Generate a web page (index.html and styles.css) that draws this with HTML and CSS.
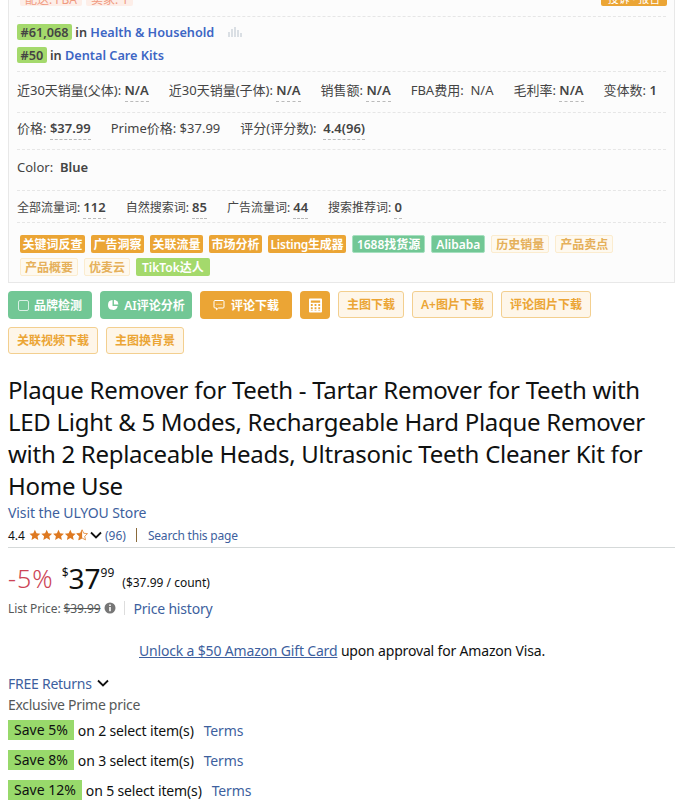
FILE: index.html
```html
<!DOCTYPE html>
<html lang="zh">
<head>
    <meta charset="UTF-8">
    <title>Plaque Remover for Teeth</title>
    <link rel="stylesheet" href="styles.css">
</head>
<body>
    <div class="panel">
        <div class="top-row">
            <div class="top-tags">
                <span class="tag-red">配送: FBA</span>
                <span class="tag-red">卖家: 1</span>
            </div>
            <span class="top-btn">投诉 · 报告</span>
        </div>

        <div class="rank-row">
            <div class="rank-line">
                <span class="rank-num">#61,068</span> in <a class="rank-link">Health &amp; Household</a>
                <svg class="rank-icon" width="14" height="11" viewBox="0 0 14 11"><path d="M1 5v5M4 2v8M7 0v10M10 3v7M13 6v4" stroke="#c4ccd4" stroke-width="1.200" fill="none"/></svg>
            </div>
            <div class="rank-line">
                <span class="rank-num">#50</span> in <a class="rank-link">Dental Care Kits</a>
            </div>
        </div>

        <div class="data-row sales-row">
            <span>近30天销量(父体): <b class="dash">N/A</b></span>
            <span>近30天销量(子体): <b class="dash">N/A</b></span>
            <span>销售额: <b class="dash">N/A</b></span>
            <span>FBA费用: &nbsp;N/A</span>
            <span>毛利率: <b class="dash">N/A</b></span>
            <span>变体数: <b>1</b></span>
        </div>

        <div class="data-row price-row">
            <span>价格: <b class="dash">$37.99</b></span>
            <span>Prime价格: $37.99</span>
            <span>评分(评分数): &nbsp;<b class="dash">4.4(96)</b></span>
        </div>

        <div class="data-row color-row">
            <span>Color: &nbsp;<b>Blue</b></span>
        </div>

        <div class="data-row traffic-row">
            <span>全部流量词: <b class="dash">112</b></span>
            <span>自然搜索词: <b class="dash">85</b></span>
            <span>广告流量词: <b class="dash">44</b></span>
            <span>搜索推荐词: <b class="dash">0</b></span>
        </div>

        <div class="tag-row">
            <span class="tag orange">关键词反查</span>
            <span class="tag orange">广告洞察</span>
            <span class="tag orange">关联流量</span>
            <span class="tag orange">市场分析</span>
            <span class="tag orange tag-listing">Listing生成器</span>
            <span class="tag green">1688找货源</span>
            <span class="tag green">Alibaba</span>
            <span class="tag pale">历史销量</span>
            <span class="tag pale">产品卖点</span>
            <span class="tag pale">产品概要</span>
            <span class="tag pale">优麦云</span>
            <span class="tag lime">TikTok达人</span>
        </div>
    </div>

    <div class="btn-row">
        <button class="btn btn-green btn-brand">
            <svg width="11" height="11" viewBox="0 0 11 11"><rect x=".5" y=".5" width="10" height="10" rx="1.500" fill="none" stroke="#d8f0e4" stroke-width="1"/></svg>
            品牌检测
        </button>
        <button class="btn btn-green btn-ai">
            <svg width="12" height="12" viewBox="0 0 13 13"><path d="M6 1.200a5.300 5.300 0 1 0 5.600 6.300H6z" fill="#fff"/><path d="M7.500 .8v5.200h4.800A5 5 0 0 0 7.500 .8z" fill="#fff"/></svg>
            AI评论分析
        </button>
        <button class="btn btn-orange btn-review">
            <svg width="12" height="12" viewBox="0 0 12 12"><path d="M2 1.500h8a1 1 0 0 1 1 1v5.500a1 1 0 0 1-1 1H5.500L3.500 10.800V9H2a1 1 0 0 1-1-1V2.500a1 1 0 0 1 1-1z" fill="none" stroke="#fff" stroke-width="1"/><path d="M3.500 5.300h1M5.500 5.300h1M7.500 5.300h1" stroke="#fff" stroke-width="1"/></svg>
            评论下载
        </button>
        <button class="btn btn-orange btn-calc">
            <svg width="13" height="15" viewBox="0 0 14 15"><path fill="#fff" fill-rule="evenodd" d="M1 0h12a1 1 0 0 1 1 1v13a1 1 0 0 1-1 1H1a1 1 0 0 1-1-1V1a1 1 0 0 1 1-1zm1 2v2.500h10V2zm0 4v2h2V6zm4 0v2h2V6zm4 0v2h2V6zM2 9.500v2h2v-2zm4 0v2h2v-2zm4 0v2h2v-2zM2 12.800V13.500h2v-.7zm4 0v.7h2v-.7zm4 0v.7h2v-.7z"/></svg>
        </button>
        <button class="btn btn-pale">主图下载</button>
        <button class="btn btn-pale">A+图片下载</button>
        <button class="btn btn-pale">评论图片下载</button>
        <button class="btn btn-pale">关联视频下载</button>
        <button class="btn btn-pale">主图换背景</button>
    </div>

    <div class="product">
        <h1 class="title">Plaque Remover for Teeth - Tartar Remover for Teeth with LED Light &amp; 5 Modes, Rechargeable Hard Plaque Remover with 2 Replaceable Heads, Ultrasonic Teeth Cleaner Kit for Home Use</h1>
        <a class="link store">Visit the ULYOU Store</a>
        <div class="rating-row">
            <span class="rating-num">4.4</span>
            <span class="stars">
                <svg width="59" height="12" viewBox="0 0 70 14">
                    <defs>
                        <path id="star" d="M7 .8l1.900 4.100 4.500.5-3.300 3 .9 4.400L7 10.600l-4 2.200.9-4.400L.6 5.400l4.500-.5z"/>
                    </defs>
                    <use href="#star" fill="#de7921"/>
                    <use href="#star" x="14" fill="#de7921"/>
                    <use href="#star" x="28" fill="#de7921"/>
                    <use href="#star" x="42" fill="#de7921"/>
                    <use href="#star" x="56" fill="none" stroke="#de7921" stroke-width=".9"/>
                    <path d="M63 .8l-1.900 4.100-4.500.5 3.300 3-.9 4.400 4-2.200z" fill="#de7921"/>
                </svg>
            </span>
            <svg class="chev" width="12" height="8" viewBox="0 0 12 8"><path d="M1 1.500l5 5 5-5" fill="none" stroke="#111" stroke-width="1.800"/></svg>
            <a class="link count">(96)</a>
            <span class="bar"></span>
            <a class="link search">Search this page</a>
        </div>
        <hr class="rule">
        <div class="price-line">
            <span class="discount">-5%</span>
            <span class="price"><sup>$</sup><span class="whole">37</span><sup class="cents">99</sup></span>
            <span class="unit">($37.99 / count)</span>
        </div>
        <div class="list-line">
            <span class="list-price">List Price: <s>$39.99</s></span>
            <svg class="info" width="12" height="12" viewBox="0 0 12 12"><circle cx="6" cy="6" r="5.500" fill="#767676"/><path d="M5.200 5h1.600v4.300H5.200zM5.200 2.600h1.600v1.500H5.200z" fill="#fff"/></svg>
            <span class="thin-bar"></span>
            <a class="link history">Price history</a>
        </div>
        <div class="promo"><a class="promo-link">Unlock a $50 Amazon Gift Card</a> upon approval for Amazon Visa.</div>
        <div class="returns">
            <a class="link">FREE Returns</a>
            <svg class="chev" width="12" height="8" viewBox="0 0 12 8"><path d="M1 1.500l5 5 5-5" fill="none" stroke="#111" stroke-width="1.800"/></svg>
        </div>
        <div class="exclusive">Exclusive Prime price</div>
        <div class="save-row"><span class="save">Save 5%</span> <span>on 2 select item(s)</span> <a class="link terms">Terms</a></div>
        <div class="save-row"><span class="save">Save 8%</span> <span>on 3 select item(s)</span> <a class="link terms">Terms</a></div>
        <div class="save-row"><span class="save">Save 12%</span> <span>on 5 select item(s)</span> <a class="link terms">Terms</a></div>
    </div>
</body>
</html>
```

FILE: styles.css
```css
* {
    box-sizing: border-box;
}

body {
    margin: 0;
    height: 809px;
    overflow: hidden;
    background: #fff;
    color: #0f1111;
    font-family: "Noto Sans", "Noto Sans CJK SC", sans-serif;
}

.panel {
    margin: -6px 14px 0 8px;
    height: 289px;
    padding: 0 8px;
    background: #fcfcfc;
    border: 1px solid #e8e8e8;
    border-top: none;
    color: #444;
    font-size: 13px;
}

.top-row {
    display: flex;
    justify-content: space-between;
    height: 23px;
    padding-left: 3px;
    border-bottom: 1px dashed #e6e6e6;
}

.top-tags {
    display: flex;
    gap: 4px;
}

.tag-red {
    height: 12px;
    padding: 0 5px;
    background: #fdeee8;
    color: #f09a80;
    border-radius: 2px;
    font-size: 12px;
    line-height: 12px;
}

.top-btn {
    width: 66px;
    height: 12px;
    margin-right: -1px;
    background: #eba535;
    color: #fff;
    border-radius: 2px;
    font-size: 11px;
    line-height: 10px;
    text-align: center;
}

.rank-row {
    height: 55px;
    padding-top: 4px;
    border-bottom: 1px dashed #e6e6e6;
    font-size: 12.700px;
    font-weight: 600;
}

.rank-line {
    height: 23px;
    line-height: 23px;
}

.rank-num {
    display: inline-block;
    height: 16px;
    padding: 0 3.500px;
    background: #a4d96c;
    border-radius: 2px;
    line-height: 16px;
}

.rank-link {
    color: #3d66c4;
}

.rank-icon {
    margin-left: 10px;
    vertical-align: -1px;
}

.data-row {
    display: flex;
    gap: 20px;
    align-items: center;
    border-bottom: 1px dashed #e6e6e6;
}

.data-row b {
    font-weight: 600;
}

.dash {
    padding-bottom: 2px;
    border-bottom: 1px dashed #bbb;
}

.sales-row {
    height: 41px;
    padding-bottom: 5px;
}

.price-row {
    height: 37px;
    padding-bottom: 7px;
}

.color-row {
    height: 41px;
    padding-bottom: 7px;
}

.traffic-row {
    height: 32px;
    font-size: 12px;
}

.traffic-row b {
    font-size: 13px;
}

.tag-row {
    display: flex;
    flex-wrap: wrap;
    gap: 5px 6px;
    padding: 12px 3px 0;
}

.tag {
    height: 18px;
    border-radius: 2px;
    font-size: 12px;
    font-weight: 600;
    line-height: 17px;
    border: 1px solid transparent;
}

.orange {
    padding: 0 1.500px;
    background: #eba535;
    color: #fff;
}

.tag-listing {
    letter-spacing: -.25px;
}

.green {
    background: #72c795;
    border-color: #a6e0bf;
    color: #fff;
    padding: 0 4px;
}

.pale {
    background: #fef9ef;
    border-color: #fbeccf;
    color: #e5b05a;
    padding: 0 4px;
}

.lime {
    background: #a4d96c;
    color: #fff;
    padding: 0 5px;
}

.btn-row {
    display: flex;
    flex-wrap: wrap;
    align-items: flex-start;
    gap: 8px;
    padding: 8px 8px 0;
    width: 620px;
}

.btn {
    display: flex;
    align-items: center;
    justify-content: center;
    gap: 5px;
    height: 28px;
    padding: 0 8px;
    border: none;
    border-radius: 4px;
    color: #fff;
    font-family: inherit;
    font-size: 12px;
    font-weight: 600;
}

.btn-green {
    background: #72c795;
}

.btn-orange {
    background: #eba535;
}

.btn-brand {
    width: 84px;
    padding: 0;
}

.btn-ai {
    width: 92px;
    padding: 0;
}

.btn-review {
    width: 92px;
    padding: 0;
    gap: 6px;
}

.btn-calc {
    width: 30px;
    padding: 0;
}

.btn-pale {
    height: 27px;
    padding-bottom: 2px;
    background: #fef6e9;
    border: 1px solid #f3cf8f;
    border-radius: 3px;
    color: #eba535;
}

.product {
    padding: 0 14px 0 8px;
}

.title {
    margin: 20px 0 1px;
    font-size: 24px;
    font-weight: 400;
    line-height: 32px;
    letter-spacing: -.28px;
    color: #0f1111;
}

.link {
    color: #3d5f9e;
}

.store {
    display: block;
    font-size: 14px;
    line-height: 20px;
    letter-spacing: -.1px;
}

.rating-row {
    display: flex;
    align-items: center;
    height: 24px;
    font-size: 12px;
}

.rating-num {
    margin-right: 4px;
}

.stars {
    display: flex;
}

.rating-row .chev {
    margin-left: 2px;
}

.count {
    margin-left: 3px;
}

.bar {
    width: 1px;
    height: 14px;
    margin: 0 11px 0 10px;
    background: #8a6a3a;
}

.search {
    letter-spacing: -.2px;
}

.rule {
    margin: 0;
    border: none;
    border-top: 1px solid #d5d9d9;
}

.price-line {
    display: flex;
    align-items: center;
    height: 38px;
    margin-top: 11px;
}

.discount {
    font-size: 25px;
    color: #cc4455;
    font-weight: 300;
    letter-spacing: 1px;
}

.price {
    margin-left: 8px;
    display: flex;
    align-items: flex-start;
}

.price sup {
    font-size: 12px;
    line-height: 16px;
    margin-top: 5px;
}

.whole {
    font-size: 28px;
    line-height: 36px;
}

.unit {
    margin-left: 8px;
    font-size: 12px;
    padding-top: 8px;
}

.list-line {
    display: flex;
    align-items: center;
    height: 22px;
    font-size: 12px;
    letter-spacing: -.1px;
    color: #565959;
}

.info {
    margin-left: 3px;
}

.thin-bar {
    width: 1px;
    height: 14px;
    margin: 0 9px 0 8px;
    background: #ddd;
}

.history {
    font-size: 14px;
    letter-spacing: -.2px;
}

.promo {
    margin-top: 22px;
    padding-left: 131px;
    font-size: 14px;
    line-height: 20px;
    letter-spacing: -.17px;
}

.promo-link {
    color: #3d5f9e;
    text-decoration: underline;
}

.returns {
    display: flex;
    align-items: center;
    gap: 5px;
    margin-top: 12px;
    height: 20px;
    font-size: 14px;
    letter-spacing: -.25px;
}

.exclusive {
    margin-top: 2px;
    height: 20px;
    font-size: 14px;
    line-height: 20px;
    letter-spacing: -.28px;
    color: #565959;
}

.save-row {
    height: 30px;
    display: flex;
    align-items: center;
    font-size: 14px;
    gap: 4px;
    letter-spacing: -.15px;
}

.save {
    background: #98d96b;
    padding: 0 6px;
    height: 20px;
    line-height: 20px;
    letter-spacing: 0;
}

.terms {
    margin-left: 6px;
}
```
